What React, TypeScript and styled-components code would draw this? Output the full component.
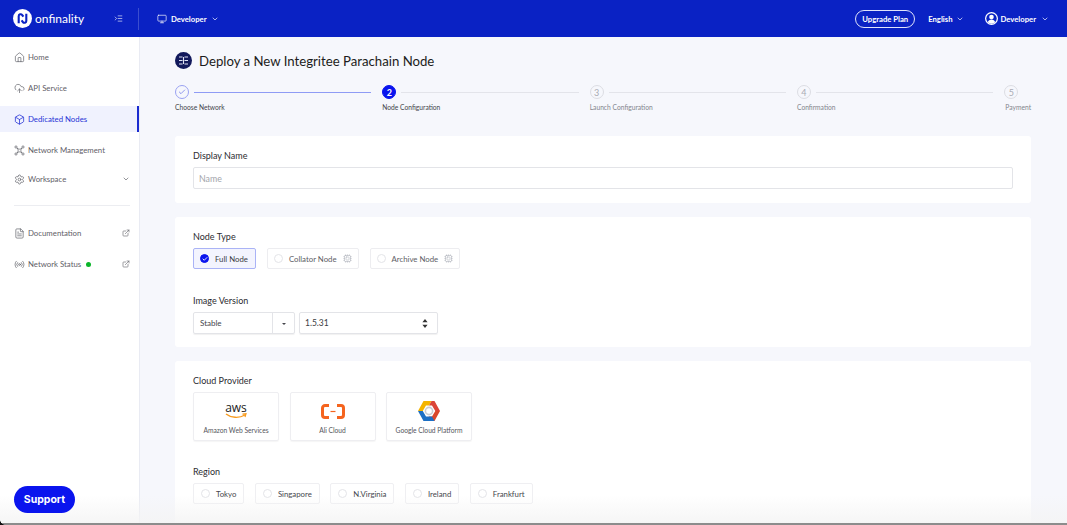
import React, { FC } from "react";
import styled, { createGlobalStyle } from "styled-components";
import {
  Home,
  Box,
  Settings,
  ChevronDown,
  FileText,
  Radio,
  ExternalLink,
  Check,
  Cpu,
  Monitor,
  Indent,
  CloudUpload,
} from "lucide-react";

const GlobalStyle = createGlobalStyle`
  html, body {
    margin: 0;
    height: 100%;
    overflow: hidden;
    background: #f6f7fc;
    font-family: "Lato", "Open Sans", sans-serif;
    color: #2a2a2e;
  }
  * { box-sizing: border-box; }
`;

const steps = [
  { label: "Choose Network", state: "done" },
  { label: "Node Configuration", state: "current" },
  { label: "Launch Configuration", state: "todo" },
  { label: "Confirmation", state: "todo" },
  { label: "Payment", state: "todo" },
];

const regions = ["Tokyo", "Singapore", "N.Virginia", "Ireland", "Frankfurt"];

const LogoMark = () => (
  <svg width="19" height="19" viewBox="0 0 20 20">
    <circle cx="10" cy="10" r="10" fill="#fff" />
    <path d="M6 15V7.500a2 2 0 0 1 3.600-1.200L11 8" fill="none" stroke="#0a22c4" strokeWidth="2.2" />
    <path d="M14 5v7.500a2 2 0 0 1-3.600 1.200L9 12" fill="none" stroke="#0a22c4" strokeWidth="2.2" />
  </svg>
);

const IntegriteeMark = () => (
  <svg width="17" height="17" viewBox="0 0 17 17">
    <circle cx="8.500" cy="8.500" r="8.500" fill="#12195c" />
    <path d="M4 5h3.500M4 8.500h3.500M4 12h3.500M9.500 5H13M9.500 8.500H13M9.500 12H13M8.500 5v7" stroke="#dfe3f5" strokeWidth="1.1" fill="none" />
  </svg>
);

const UserMark = () => (
  <svg width="13" height="13" viewBox="0 0 13 13">
    <circle cx="6.500" cy="6.500" r="6.500" fill="#fff" />
    <circle cx="6.500" cy="6.500" r="5.200" fill="#0a22c4" />
    <circle cx="6.500" cy="5" r="2.300" fill="#fff" />
    <path d="M2.800 10.300c.6-2 2-2.900 3.700-2.900s3.100.9 3.700 2.900a5.200 5.200 0 0 1-7.400 0z" fill="#fff" />
  </svg>
);

const NetworkIcon = () => (
  <svg width="11" height="11" viewBox="0 0 11 11" fill="none" stroke="currentColor" strokeWidth="0.7">
    <path d="M3 3c1.500 1.500 3.500 1.500 5 0M3 8c1.500-1.500 3.500-1.500 5 0M3 3c1.500 1.500 1.500 3.500 0 5M8 3c-1.500 1.500-1.500 3.500 0 5" />
    <circle cx="2" cy="2" r="1.100" />
    <circle cx="9" cy="2" r="1.100" />
    <circle cx="2" cy="9" r="1.100" />
    <circle cx="9" cy="9" r="1.100" />
  </svg>
);

const UpDownCaret = () => (
  <svg width="6" height="9" viewBox="0 0 6 9" fill="#333">
    <path d="M3 0l2.600 3.300H.4zM3 9L.4 5.700h5.200z" />
  </svg>
);

const AwsLogo = () => (
  <AwsWrap>
    <AwsText>aws</AwsText>
    <svg width="22" height="6" viewBox="0 0 22 6">
      <path d="M1 1c5 4 13 4.500 19 1" fill="none" stroke="#f79a1d" strokeWidth="1.4" />
      <path d="M17.500 1.200l3.500-.4-1 3.200" fill="none" stroke="#f79a1d" strokeWidth="1.2" />
    </svg>
  </AwsWrap>
);

const AliLogo = () => (
  <svg width="24" height="15" viewBox="0 0 24 15">
    <path d="M8 1.500H4A2.500 2.500 0 0 0 1.500 4v7A2.500 2.500 0 0 0 4 13.500h4" fill="none" stroke="#f5641e" strokeWidth="3" />
    <path d="M16 1.500h4A2.500 2.500 0 0 1 22.500 4v7a2.500 2.500 0 0 1-2.500 2.500h-4" fill="none" stroke="#f5641e" strokeWidth="3" />
    <path d="M9.500 7.500h5" stroke="#f5641e" strokeWidth="1.2" />
  </svg>
);

const GcpLogo = () => (
  <svg width="24" height="22" viewBox="0 0 24 22">
    <path d="M6.500 1h8l-2.500 4.500H9L5.800 11 1 11z" fill="#f4b400" />
    <path d="M14.500 1h3L23 11l-4.700 0L15 5.500h-3z" fill="#db4437" />
    <path d="M23 11l-5.500 10h-8l2.500-4.500h3l3.300-5.500z" fill="#d9472b" />
    <path d="M1 11l5.500 10h11L15 16.500H9L5.800 11z" fill="#1c6fc4" />
    <circle cx="12" cy="11" r="3.600" fill="#fff" stroke="#c9ccd2" strokeWidth="1.6" />
  </svg>
);

const NavItem: FC<{
  icon: React.ReactNode;
  label: string;
  active?: boolean;
  compact?: boolean;
  trailing?: React.ReactNode;
  dot?: boolean;
}> = ({ icon, label, active, compact, trailing, dot }) => (
  <NavRow $active={active} $compact={compact}>
    {icon}
    <NavLabel>
      {label}
      {dot && <StatusDot />}
    </NavLabel>
    {trailing}
  </NavRow>
);

export default function App() {
  return (
    <Page>
      <GlobalStyle />
      <TopBar>
        <LogoArea>
          <LogoMark />
          <LogoText>onfinality</LogoText>
          <Collapse>
            <Indent size={9} strokeWidth={1.6} />
          </Collapse>
        </LogoArea>
        <TopDivider />
        <TopMenu>
          <Monitor size={10} strokeWidth={1.6} />
          Developer
          <ChevronDown size={8} strokeWidth={2} />
        </TopMenu>
        <TopRight>
          <UpgradeButton>Upgrade Plan</UpgradeButton>
          <LangMenu>
            English
            <ChevronDown size={8} strokeWidth={2} />
          </LangMenu>
          <UserMenu>
            <UserMark />
            Developer
            <ChevronDown size={8} strokeWidth={2} />
          </UserMenu>
        </TopRight>
      </TopBar>
      <Body>
        <Sidebar>
          <NavGroup>
            <NavItem icon={<Home size={11} strokeWidth={1.5} />} label="Home" />
            <NavItem icon={<CloudUpload size={11} strokeWidth={1.5} />} label="API Service" />
            <NavItem icon={<Box size={11} strokeWidth={1.7} />} label="Dedicated Nodes" active />
            <NavItem icon={<NetworkIcon />} label="Network Management" />
            <NavItem
              icon={<Settings size={11} strokeWidth={1.5} />}
              label="Workspace"
              compact
              trailing={<ChevronDown size={8} strokeWidth={2} />}
            />
          </NavGroup>
          <SideDivider />
          <NavGroup>
            <NavItem
              icon={<FileText size={11} strokeWidth={1.5} />}
              label="Documentation"
              trailing={<ExternalLink size={8} strokeWidth={1.8} />}
            />
            <NavItem
              icon={<Radio size={11} strokeWidth={1.5} />}
              label="Network Status"
              dot
              trailing={<ExternalLink size={8} strokeWidth={1.8} />}
            />
          </NavGroup>
          <SupportButton>Support</SupportButton>
        </Sidebar>
        <Main>
          <TitleRow>
            <IntegriteeMark />
            <Title>Deploy a New Integritee Parachain Node</Title>
          </TitleRow>
          <Stepper>
            {steps.map((s, i) => (
              <Step key={s.label} $last={i === steps.length - 1}>
                <StepTrack>
                  <StepCircle $state={s.state}>
                    {s.state === "done" ? <Check size={8} strokeWidth={1.8} /> : i + 1}
                  </StepCircle>
                  {i < steps.length - 1 && <StepLine $done={s.state === "done"} />}
                </StepTrack>
                <StepLabel $muted={s.state === "todo"} $last={i === steps.length - 1}>
                  {s.label}
                </StepLabel>
              </Step>
            ))}
          </Stepper>

          <Card>
            <Field>
              <FieldLabel>Display Name</FieldLabel>
              <NameInput placeholder="Name" />
            </Field>
          </Card>

          <Card $gap={26}>
            <Field>
              <FieldLabel>Node Type</FieldLabel>
              <OptionRow>
                <NodeOption $selected>
                  <RadioMark $checked>
                    <Check size={6} strokeWidth={3.5} />
                  </RadioMark>
                  Full Node
                </NodeOption>
                <NodeOption>
                  <RadioMark />
                  Collator Node
                  <Cpu size={9} strokeWidth={1.6} color="#b4b7bf" />
                </NodeOption>
                <NodeOption>
                  <RadioMark />
                  Archive Node
                  <Cpu size={9} strokeWidth={1.6} color="#b4b7bf" />
                </NodeOption>
              </OptionRow>
            </Field>
            <Field>
              <FieldLabel>Image Version</FieldLabel>
              <SelectRow>
                <ChannelSelect>
                  <ChannelValue>Stable</ChannelValue>
                  <CaretCell>
                    <Caret />
                  </CaretCell>
                </ChannelSelect>
                <VersionSelect>
                  1.5.31
                  <UpDownCaret />
                </VersionSelect>
              </SelectRow>
            </Field>
          </Card>

          <Card $gap={25} $tall>
            <Field>
              <FieldLabel>Cloud Provider</FieldLabel>
              <ProviderRow>
                <ProviderTile>
                  <ProviderLogo>
                    <AwsLogo />
                  </ProviderLogo>
                  Amazon Web Services
                </ProviderTile>
                <ProviderTile>
                  <ProviderLogo>
                    <AliLogo />
                  </ProviderLogo>
                  Ali Cloud
                </ProviderTile>
                <ProviderTile>
                  <ProviderLogo>
                    <GcpLogo />
                  </ProviderLogo>
                  Google Cloud Platform
                </ProviderTile>
              </ProviderRow>
            </Field>
            <Field>
              <FieldLabel>Region</FieldLabel>
              <RegionRow>
                {regions.map((r) => (
                  <RegionOption key={r}>
                    <RadioMark />
                    {r}
                  </RegionOption>
                ))}
              </RegionRow>
            </Field>
          </Card>
        </Main>
      </Body>
      <BottomFade />
    </Page>
  );
}

const Page = styled.div`
  position: relative;
  height: 525px;
  overflow: hidden;
  display: flex;
  flex-direction: column;
`;

const TopBar = styled.header`
  height: 37px;
  flex: none;
  display: flex;
  align-items: center;
  background: #0a22c4;
  color: #fff;
  padding-right: 18px;
`;

const LogoArea = styled.div`
  width: 138px;
  display: flex;
  align-items: center;
  padding-left: 13px;
  gap: 3px;
`;

const LogoText = styled.span`
  font-size: 12px;
  line-height: 1;
  font-weight: 400;
`;

const Collapse = styled.span`
  display: flex;
  margin-left: 27px;
`;

const TopDivider = styled.div`
  width: 1px;
  height: 22px;
  background: rgba(255, 255, 255, 0.2);
`;

const TopMenu = styled.div`
  display: flex;
  align-items: center;
  gap: 4px;
  font-size: 7.7px;
  font-weight: 700;
  margin-left: 18px;
`;

const TopRight = styled.div`
  margin-left: auto;
  display: flex;
  align-items: center;
`;

const UpgradeButton = styled.button`
  height: 18px;
  width: 60px;
  padding: 0;
  border: 1px solid #dfe3fb;
  border-radius: 9px;
  background: transparent;
  color: #fff;
  font: 700 7.7px "Lato", sans-serif;
`;

const LangMenu = styled(TopMenu)`
  margin-left: 13px;
`;

const UserMenu = styled(TopMenu)`
  margin-left: 21px;
  gap: 2px;
  svg:last-child {
    margin-left: 3px;
  }
`;

const Body = styled.div`
  flex: 1;
  display: flex;
  min-height: 0;
`;

const Sidebar = styled.aside`
  width: 140px;
  flex: none;
  display: flex;
  flex-direction: column;
  background: #fff;
  padding: 7px 0 12px;
  border-right: 1px solid #e9ebf3;
`;

const NavGroup = styled.nav`
  display: flex;
  flex-direction: column;
  gap: 5px;
`;

const NavRow = styled.div<{ $active?: boolean; $compact?: boolean }>`
  height: 26px;
  display: flex;
  align-items: center;
  gap: 3px;
  padding: 0 9px 0 14px;
  margin-top: ${(p) => (p.$compact ? "-2px" : "0")};
  font-size: 7.8px;
  color: ${(p) => (p.$active ? "#2733d6" : "#5f6067")};
  background: ${(p) => (p.$active ? "#f0f2fe" : "transparent")};
  border-right: ${(p) => (p.$active ? "2px solid #1a2bd0" : "none")};
  svg {
    flex: none;
  }
`;

const NavLabel = styled.span`
  flex: 1;
  display: flex;
  align-items: center;
  gap: 5px;
  white-space: nowrap;
`;

const StatusDot = styled.i`
  width: 5px;
  height: 5px;
  border-radius: 50%;
  background: #0ab52a;
`;

const SideDivider = styled.div`
  height: 1px;
  margin: 13px 9px 14px 14px;
  background: #ecedf1;
`;

const SupportButton = styled.button`
  position: relative;
  z-index: 2;
  margin: auto 0 0 14px;
  width: 61px;
  height: 27px;
  border: none;
  border-radius: 14px;
  background: #0a14ee;
  color: #fff;
  font: 700 10.5px "Inter", "Lato", sans-serif;
`;

const Main = styled.main`
  flex: 1;
  min-width: 0;
  padding: 15px 36px 0 35px;
  background: #f6f7fc;
`;

const TitleRow = styled.div`
  display: flex;
  align-items: center;
  gap: 7px;
  height: 17px;
`;

const Title = styled.h1`
  margin: 0;
  font-size: 13.2px;
  font-weight: 400;
  color: #1c1c20;
  white-space: nowrap;
`;

const Stepper = styled.div`
  display: flex;
  margin-top: 16px;
  height: 51px;
`;

const Step = styled.div<{ $last?: boolean }>`
  flex: ${(p) => (p.$last ? "0 0 26px" : "1")};
  display: flex;
  flex-direction: column;
`;

const StepTrack = styled.div`
  display: flex;
  align-items: center;
  height: 14px;
`;

const StepCircle = styled.span<{ $state: string }>`
  width: 14px;
  height: 14px;
  flex: none;
  border-radius: 50%;
  display: flex;
  align-items: center;
  justify-content: center;
  font-size: 9px;
  font-weight: ${(p) => (p.$state === "current" ? 700 : 400)};
  color: ${(p) => (p.$state === "current" ? "#fff" : p.$state === "done" ? "#4a56e0" : "#a9abb3")};
  background: ${(p) => (p.$state === "current" ? "#0a14ee" : "transparent")};
  border: 1px solid
    ${(p) => (p.$state === "current" ? "#0a14ee" : p.$state === "done" ? "#9aa2f2" : "#dcdde3")};
`;

const StepLine = styled.span<{ $done?: boolean }>`
  flex: 1;
  height: 1px;
  margin: 0 11px 0 5px;
  background: ${(p) => (p.$done ? "#8f9bf5" : "#e3e4ea")};
`;

const StepLabel = styled.span<{ $muted?: boolean; $last?: boolean }>`
  margin-top: 4px;
  margin-left: ${(p) => (p.$last ? "1px" : "0")};
  font-size: 6.7px;
  white-space: nowrap;
  color: ${(p) => (p.$muted ? "#83858d" : "#44454b")};
`;

const Card = styled.section<{ $gap?: number; $tall?: boolean }>`
  display: flex;
  flex-direction: column;
  gap: ${(p) => p.$gap ?? 0}px;
  margin-bottom: 14px;
  padding: 14px 18px 13px;
  background: #fff;
  border-radius: 3px;
  min-height: ${(p) => (p.$tall ? "180px" : "67px")};
`;

const Field = styled.div`
  display: flex;
  flex-direction: column;
  gap: 5px;
`;

const FieldLabel = styled.label`
  font-size: 9px;
  line-height: 12px;
  color: #2c2c31;
`;

const NameInput = styled.input`
  height: 22px;
  padding: 0 5px;
  border: 1px solid #e3e4e8;
  border-radius: 2px;
  font: 400 8.8px "Lato", sans-serif;
  outline: none;
  &::placeholder {
    color: #a3a5ab;
  }
`;

const OptionRow = styled.div`
  display: flex;
  gap: 11px;
  height: 21px;
`;

const NodeOption = styled.div<{ $selected?: boolean }>`
  display: flex;
  align-items: center;
  gap: 6px;
  padding: ${(p) => (p.$selected ? "0 7px 0 6px" : "0 6px")};
  font-size: 7.8px;
  color: ${(p) => (p.$selected ? "#3a3b42" : "#5d5e65")};
  background: ${(p) => (p.$selected ? "#f3f4fe" : "#fff")};
  border: 1px solid ${(p) => (p.$selected ? "#aab3f6" : "#ededf0")};
  border-radius: 2px;
  white-space: nowrap;
`;

const RadioMark = styled.span<{ $checked?: boolean }>`
  width: 9px;
  height: 9px;
  flex: none;
  border-radius: 50%;
  display: flex;
  align-items: center;
  justify-content: center;
  color: #fff;
  background: ${(p) => (p.$checked ? "#0a14ee" : "#fff")};
  border: 1px solid ${(p) => (p.$checked ? "#0a14ee" : "#e3e4e8")};
`;

const SelectRow = styled.div`
  display: flex;
  gap: 4px;
  height: 22px;
`;

const ChannelSelect = styled.div`
  width: 102px;
  display: flex;
  border: 1px solid #e3e4e8;
  border-radius: 2px;
  box-shadow: 0 1px 1px rgba(0, 0, 0, 0.06);
`;

const ChannelValue = styled.span`
  flex: 1;
  display: flex;
  align-items: center;
  padding-left: 6px;
  font-size: 8px;
  color: #44454b;
`;

const CaretCell = styled.span`
  width: 22px;
  display: flex;
  align-items: center;
  justify-content: center;
  border-left: 1px solid #e3e4e8;
`;

const Caret = styled.i`
  width: 0;
  height: 0;
  margin-top: 2px;
  border: 2.5px solid transparent;
  border-top-color: #44454b;
  border-bottom: none;
`;

const VersionSelect = styled.div`
  width: 139px;
  display: flex;
  align-items: center;
  justify-content: space-between;
  padding: 0 9px 0 5px;
  border: 1px solid #e3e4e8;
  border-radius: 2px;
  box-shadow: 0 1px 1px rgba(0, 0, 0, 0.06);
  font-size: 8.5px;
  color: #3a3b42;
`;

const ProviderRow = styled.div`
  display: flex;
  gap: 10.5px;
`;

const ProviderTile = styled.div`
  width: 86px;
  height: 49px;
  display: flex;
  flex-direction: column;
  align-items: center;
  border: 1px solid #eeeef1;
  border-radius: 2px;
  box-shadow: 0 1px 1px rgba(0, 0, 0, 0.04);
  font-size: 6.7px;
  color: #55565c;
  white-space: nowrap;
`;

const ProviderLogo = styled.div`
  height: 33px;
  display: flex;
  align-items: center;
  justify-content: center;
  padding-top: 3px;
`;

const AwsWrap = styled.div`
  display: flex;
  flex-direction: column;
  align-items: center;
`;

const AwsText = styled.span`
  font: 400 12px/10px "Open Sans", sans-serif;
  color: #222;
`;

const RegionRow = styled.div`
  display: flex;
  gap: 10.5px;
  height: 21px;
`;

const RegionOption = styled.div`
  display: flex;
  align-items: center;
  gap: 6px;
  padding: 0 7px;
  font-size: 7.8px;
  color: #44454b;
  border: 1px solid #efeff2;
  border-radius: 2px;
`;

const BottomFade = styled.div`
  position: absolute;
  left: 0;
  right: 0;
  bottom: 0;
  height: 30px;
  pointer-events: none;
  background: linear-gradient(
    to bottom,
    rgba(255, 255, 255, 0) 0%,
    rgba(244, 244, 244, 0.85) 92%,
    #8c8c8c 94%,
    #8c8c8c 100%
  );
  &::before {
    content: "";
    position: absolute;
    left: 0;
    bottom: 0;
    width: 5px;
    height: 5px;
    background: radial-gradient(circle at 100% 0, transparent 4.5px, #111 5px);
  }
`;
